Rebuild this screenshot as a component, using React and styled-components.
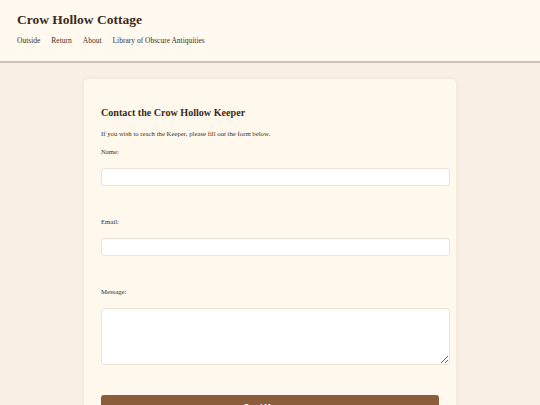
import React from "react";
import styled, { createGlobalStyle } from "styled-components";

const Global = createGlobalStyle`
  html, body { margin: 0; padding: 0; }
  body {
    background: #faefe5;
    font-family: "Liberation Serif", "Times New Roman", serif;
    color: #3f3026;
  }
`;

const Header = styled.header`
  background: #fff9ef;
  border-bottom: 2px solid #cdbfb3;
  padding: 11.5px 17px 16px;
`;

const SiteTitle = styled.h1`
  margin: 0;
  font-size: 13.5px;
  line-height: 16px;
  font-weight: bold;
  color: #3b2a20;
`;

const Nav = styled.nav`
  display: flex;
  gap: 11px;
  margin-top: 8.5px;
`;

const NavLink = styled.a`
  font-size: 7.5px;
  line-height: 9px;
  color: #3f3026;
  text-decoration: none;
`;

const Card = styled.main`
  width: 338px;
  margin: 16px auto 0;
  padding: 17px 17px 30px;
  background: #fff8ed;
  border-radius: 4.5px;
  box-shadow: 0 0 4px rgba(120, 80, 40, 0.08);
`;

const Heading = styled.h2`
  margin: 11px 0 0;
  font-size: 10.125px;
  line-height: 12px;
  font-weight: bold;
  color: #3b2a20;
`;

const Intro = styled.p`
  margin: 11px 0 0;
  font-size: 6.75px;
  line-height: 8px;
`;

const Form = styled.form`
  display: flex;
  flex-direction: column;
  margin-top: 10px;
`;

const Field = styled.div`
  display: flex;
  flex-direction: column;
  align-items: flex-start;
  margin-bottom: ${(p) => p.$after}px;
`;

const Label = styled.label`
  font-size: 6.75px;
  line-height: 8px;
  margin-bottom: 12px;
`;

const Input = styled.input`
  box-sizing: content-box;
  width: 100%;
  height: 16px;
  padding: 0 4.5px;
  margin: 0;
  border: 1px solid #ece2d6;
  border-radius: 3px;
  background: #ffffff;
  font-family: "Liberation Serif", serif;
  font-size: 7px;
  outline: none;
`;

const TextArea = styled.textarea`
  box-sizing: content-box;
  display: block;
  width: 100%;
  height: 55px;
  padding: 0 4.5px;
  margin: 0;
  border: 1px solid #ece2d6;
  border-radius: 3px;
  background: #ffffff;
  font-family: "Liberation Serif", serif;
  font-size: 7px;
  outline: none;
`;

const SendButton = styled.button`
  width: 100%;
  padding: 6.75px 0;
  border: none;
  border-radius: 3px;
  background: #8b5e3b;
  color: #ffffff;
  font-family: "Liberation Sans", Arial, sans-serif;
  font-size: 7.5px;
  font-weight: bold;
  cursor: pointer;
`;

const navItems = ["Outside", "Return", "About", "Library of Obscure Antiquities"];

export default function App() {
  return (
    <>
      <Global />
      <Header>
        <SiteTitle>Crow Hollow Cottage</SiteTitle>
        <Nav>
          {navItems.map((n) => (
            <NavLink key={n} href="#">
              {n}
            </NavLink>
          ))}
        </Nav>
      </Header>
      <Card>
        <Heading>Contact the Crow Hollow Keeper</Heading>
        <Intro>If you wish to reach the Keeper, please fill out the form below.</Intro>
        <Form onSubmit={(e) => e.preventDefault()}>
          <Field $after={32}>
            <Label htmlFor="name">Name:</Label>
            <Input id="name" type="text" />
          </Field>
          <Field $after={32}>
            <Label htmlFor="email">Email:</Label>
            <Input id="email" type="email" />
          </Field>
          <Field $after={30}>
            <Label htmlFor="message">Message:</Label>
            <TextArea id="message" />
          </Field>
          <SendButton type="submit">Send Message</SendButton>
        </Form>
      </Card>
    </>
  );
}
